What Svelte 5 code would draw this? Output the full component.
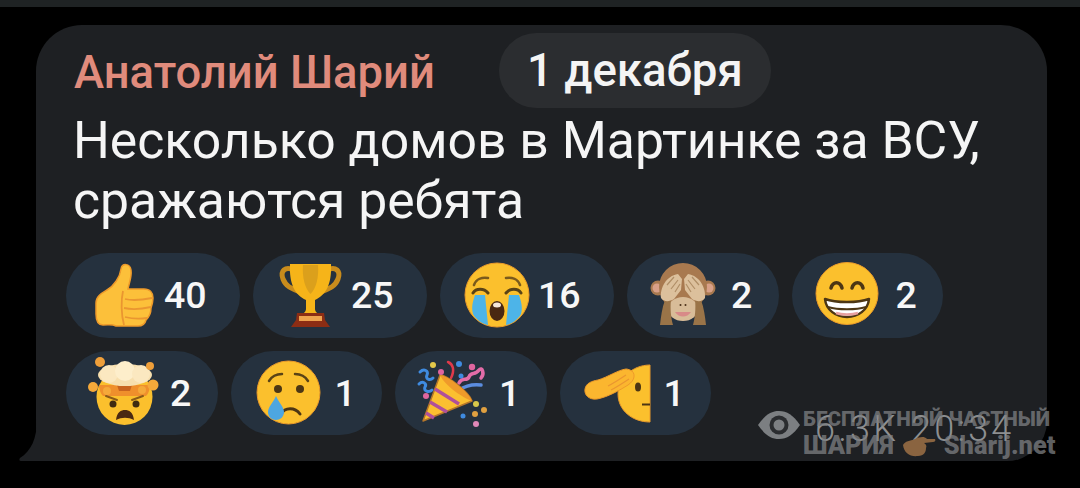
<script>
  const icons = {
    thumb: `
      <path d="M6 41C6 34 12 31 17 28C24 24 30 15 31 7C32 1 40 1 41 8C42 15 39 21 38 27L54 27C60 27 63 31 63 36C63 40 62 43 61 46C61 52 59 55 56 58C55 62 52 64 48 64L26 64C22 62 19 63 13 63C8 63 6 58 6 52Z" fill="#fcc03a" stroke="#ee9a2a" stroke-width="1.5"/>
      <path d="M33 29C31 38 31 52 34 63M35 37C43 39 52 38 62 36M34 46C43 48 52 47 61 45M35 55C43 57 50 57 57 56" fill="none" stroke="#ea9630" stroke-width="1.8"/>`,
    trophy: `
      <path d="M17 8C8 4 3 9 6 17C9 25 16 27 23 30M50 8C59 4 64 9 61 17C58 25 51 27 44 30" fill="none" stroke="#c98c1c" stroke-width="5"/>
      <path d="M13 2H54C55 22 49 33 38 38L38 47C38 50 41 52 44 53H23C26 52 29 50 29 47L29 38C18 33 12 22 13 2Z" fill="#f6b419"/>
      <path d="M26 3H41C42 15 39 27 33.500 32C28 27 25 15 26 3Z" fill="#dba01c"/>
      <path d="M20 51H47L48 58L53 65H14L19 58Z" fill="#8c2d14"/>
      <rect x="22" y="54" width="23" height="5" fill="#eea24e"/>`,
    cry: `
      <circle cx="33" cy="33" r="32" fill="#fbc02d" stroke="#ea9a2a" stroke-width="1"/>
      <path d="M10 23C12 17 18 15 24 16M56 23C54 17 48 15 42 16" fill="none" stroke="#7a5a1c" stroke-width="2.500" stroke-linecap="round"/>
      <path d="M9 31C12 26 20 26 24 31M42 31C46 26 54 26 57 31" fill="none" stroke="#5a4316" stroke-width="3" stroke-linecap="round"/>
      <path d="M11 33H21L24 63C19 62 12 58 9 52C7 45 9 39 11 33ZM45 33H55C57 39 59 45 57 52C54 58 47 62 42 63Z" fill="#4db4e8"/>
      <ellipse cx="33" cy="49" rx="7.500" ry="10" fill="#4a2812"/>
      <ellipse cx="33" cy="43" rx="4" ry="2.500" fill="#f5e6d8"/>`,
    monkey: `
      <circle cx="7" cy="26" r="7.500" fill="#a8794f"/><circle cx="57" cy="26" r="7.500" fill="#a8794f"/>
      <circle cx="6" cy="26" r="4.500" fill="#d8a088"/><circle cx="58" cy="26" r="4.500" fill="#d8a088"/>
      <ellipse cx="32" cy="25" rx="24" ry="24" fill="#a8794f"/>
      <ellipse cx="32" cy="47" rx="15" ry="12" fill="#d8bc98"/>
      <path d="M24 50C28 56 36 56 40 50Z" fill="#d88a88"/>
      <circle cx="29.500" cy="43" r="1" fill="#4a3018"/><circle cx="34.500" cy="43" r="1" fill="#4a3018"/>
      <path d="M9 63C10 54 11 46 14 38L20 38C19 46 20 56 22 63ZM55 63C54 54 53 46 50 38L44 38C45 46 44 56 42 63Z" fill="#9a7448"/>
      <path d="M10 36C9 26 15 14 27 12L31 17L30 28L23 37C18 40 13 40 10 36ZM54 36C55 26 49 14 37 12L33 17L34 28L41 37C46 40 51 40 54 36Z" fill="#dcc09c"/>
      <path d="M16 23L23 15M20 27L27 18M24 30L29 22M48 23L41 15M44 27L37 18M40 30L35 22" stroke="#b08e66" stroke-width="1.200"/>`,
    grin: `
      <circle cx="31" cy="31.500" r="31" fill="#fbc02d" stroke="#ea9a2a" stroke-width="1"/>
      <path d="M15 26C17 19 24 19 26 26M36 26C38 19 45 19 47 26" fill="none" stroke="#4c3614" stroke-width="3.500" stroke-linecap="round"/>
      <path d="M9 37C20 41 42 41 53 37C52 48 42 55 31 55C20 55 10 48 9 37Z" fill="#fff" stroke="#4c3614" stroke-width="2.500" stroke-linejoin="round"/>
      <path d="M12 45C22 48 40 48 50 45" fill="none" stroke="#4c3614" stroke-width="2"/>
      <path d="M20 51C26 53 36 53 42 51" fill="none" stroke="#e8a0a0" stroke-width="2.500"/>`,
    blown: `
      <circle cx="34.500" cy="37" r="28" fill="#fbc02d"/>
      <path d="M9 25H60C60 30 58 34 56 36H13C11 34 9 30 9 25Z" fill="#ef8f2c"/>
      <path d="M26 22H43L40 31H29Z" fill="#c8641f"/>
      <ellipse cx="35" cy="15" rx="27" ry="11" fill="#f7dfae"/>
      <circle cx="19" cy="14" r="9" fill="#fbe8c0"/><circle cx="35" cy="11" r="10" fill="#fdeecb"/><circle cx="51" cy="14" r="9" fill="#fbe8c0"/>
      <circle cx="10" cy="2" r="5" fill="#ef9f3a"/><circle cx="60" cy="6" r="4" fill="#ef9f3a"/>
      <circle cx="3" cy="27" r="5" fill="#f5a93a"/><circle cx="63" cy="25" r="5.500" fill="#f5a93a"/>
      <circle cx="17" cy="31" r="4" fill="#f5a93a"/><circle cx="52" cy="30" r="4" fill="#f5a93a"/>
      <circle cx="23" cy="44" r="3.500" fill="#3f2a10"/><circle cx="46" cy="44" r="3.500" fill="#3f2a10"/>
      <path d="M16 36L27 40M53 36L42 40" stroke="#8a5a18" stroke-width="2" stroke-linecap="round"/>
      <path d="M26 60C27 52 31 50 35 50C39 50 43 52 44 60C38 57 32 57 26 60Z" fill="#4a2812"/>`,
    sad: `
      <circle cx="33.500" cy="32.500" r="31.500" fill="#fbc02d" stroke="#ea9a2a" stroke-width="1"/>
      <path d="M14 21C17 16 22 14 27 14M53 21C50 16 45 14 40 14" fill="none" stroke="#5a4316" stroke-width="2.500" stroke-linecap="round"/>
      <circle cx="23" cy="29" r="4" fill="#4c3614"/><circle cx="45" cy="29" r="4" fill="#4c3614"/>
      <path d="M26 54C30 47 40 47 45 54" fill="none" stroke="#4c3614" stroke-width="3" stroke-linecap="round"/>
      <path d="M21 36C24 43 29 47 29 52C29 57 25 60 21 60C17 60 13 57 13 52C13 47 18 43 21 36Z" fill="#4da6e0"/>`,
    party: `
      <path d="M-1 14C3 10 8 13 6 17C4 21 9 23 12 20" transform="translate(2 -2)" fill="none" stroke="#3f8be0" stroke-width="3" stroke-linecap="round"/>
      <path d="M0 24C4 20 8 24 6 27C4 31 10 33 13 30" fill="none" stroke="#3f8be0" stroke-width="3" stroke-linecap="round"/>
      <path d="M29 2C34 4 36 10 32 18" fill="none" stroke="#e03a4a" stroke-width="2.500" stroke-linecap="round"/>
      <path d="M40 23C43 16 48 22 50 17C52 11 56 16 60 10C63 6 66 14 62 18" fill="none" stroke="#e36ca8" stroke-width="3.500" stroke-linecap="round"/>
      <path d="M40 30C46 26 54 24 62 25" fill="none" stroke="#5b8de0" stroke-width="3.500" stroke-linecap="round"/>
      <path d="M4 61L21 15C28 15 50 32 53 41Z" fill="#fbbf30" stroke="#b5762a" stroke-width="1.500" stroke-linejoin="round"/>
      <path d="M21 15C28 15 50 32 53 41C44 38 26 26 21 15Z" fill="#ef9a2a"/>
      <path d="M16 29L40 44M11 42L28 52M7 53L15 58" fill="none" stroke="#b0509a" stroke-width="3.500"/>
      <circle cx="14" cy="5" r="3" fill="#e3c84a"/><circle cx="22" cy="12" r="3" fill="#e0659f"/><circle cx="40" cy="4" r="3" fill="#3f8be0"/>
      <circle cx="53" cy="7" r="3.200" fill="#e0659f"/><circle cx="42" cy="16" r="2.500" fill="#3f8be0"/><circle cx="7" cy="36" r="3" fill="#e0659f"/>
      <circle cx="57" cy="44" r="3" fill="#d8c84a"/><circle cx="65" cy="50" r="3" fill="#e0a040"/><circle cx="56" cy="54" r="3" fill="#e0a040"/>
      <circle cx="44" cy="56" r="2.500" fill="#3f8be0"/><circle cx="57" cy="64" r="3" fill="#e088b8"/>`,
    salute: `
      <path d="M66 5C48 5 34 19 34 34C34 50 48 62 66 62Z" fill="#fbc02d" stroke="#ea9a2a" stroke-width="1"/>
      <path d="M48 11C52 15 50 21 44 25C36 30 24 37 13 39C5 40 0 35 1 29C2 23 8 21 14 20C24 17 34 10 42 9C44 9 46 10 48 11Z" fill="#fbb62f" stroke="#ee9a2a" stroke-width="1"/>
      <path d="M24 26C30 23 36 19 42 15M27 30C33 27 39 23 45 19" fill="none" stroke="#ea9630" stroke-width="1.200"/>
      <ellipse cx="54" cy="27" rx="3" ry="4.500" fill="#4c3614"/>
      <path d="M58 44.500H66" stroke="#4c3614" stroke-width="2"/>`
  };

  const rows = [
    [
      { icon: "thumb", count: 40 },
      { icon: "trophy", count: 25 },
      { icon: "cry", count: 16 },
      { icon: "monkey", count: 2 },
      { icon: "grin", count: 2 }
    ],
    [
      { icon: "blown", count: 2 },
      { icon: "sad", count: 1 },
      { icon: "party", count: 1 },
      { icon: "salute", count: 1 }
    ]
  ];
</script>

<div class="page">
  <div class="topbar"></div>

  <div class="bubble">
    <svg class="tail" width="22" height="42" viewBox="0 0 22 42">
      <path d="M18 0C18 20 12 32 1 39C0 40 0 42 2 42H22V0Z" fill="#1e2023" />
    </svg>

    <header class="head">
      <span class="name">Анатолий Шарий</span>
      <span class="date">1 декабря</span>
    </header>

    <p class="text">Несколько домов в Мартинке за ВСУ,<br />сражаются ребята</p>

    <div class="reactions">
      {#each rows as row}
        <div class="row">
          {#each row as r}
            <div class="chip" class:wide={r.count > 9}>
              <svg class="emoji" viewBox="0 0 66 66">{@html icons[r.icon]}</svg>
              <span class="count">{r.count}</span>
            </div>
          {/each}
        </div>
      {/each}
    </div>

    <div class="meta">
      <svg class="eye" width="44" height="30" viewBox="0 0 44 30">
        <path d="M1 15C8 5 14 1 22 1C30 1 36 5 43 15C36 25 30 29 22 29C14 29 8 25 1 15Z" fill="#7c7f82" />
        <circle cx="22" cy="15" r="9.500" fill="#2a2c2f" />
        <circle cx="22" cy="15" r="5.500" fill="#7c7f82" />
      </svg>
      <span class="stamp">6.3K 20:34</span>
      <div class="mark">
        <div class="mark-top">БЕСПЛАТНЫЙ ЧАСТНЫЙ</div>
        <div class="mark-bottom">
          ШАРИЯ
          <svg width="34" height="22" viewBox="0 0 34 22">
            <path d="M1 10C3 6 8 6 13 4C18 2 22 1 25 4L33 4C34 5 33 7 31 7L22 8C24 9 25 11 24 13C24 17 22 21 16 21C8 22 2 18 1 10Z" fill="#8a6440" />
          </svg>
          Sharij.net
        </div>
      </div>
    </div>
  </div>
</div>

<style>
  :global(body) {
    background: #000;
  }

  .page {
    width: 1080px;
    height: 488px;
    overflow: hidden;
    font-family: Roboto, "Noto Sans", sans-serif;
  }

  .topbar {
    height: 7px;
    background: #1f2324;
  }

  .bubble {
    position: relative;
    box-sizing: border-box;
    width: 1011px;
    margin: 18px 0 0 36px;
    padding: 8px 30px 26px;
    background: #1e2023;
    border-radius: 46px 46px 40px 0;
  }

  .tail {
    position: absolute;
    left: -17px;
    bottom: 0;
  }

  .head {
    display: flex;
    align-items: center;
    gap: 64px;
    padding-left: 8px;
  }

  .name {
    padding-top: 4px;
    font-size: 45.4px;
    font-weight: 500;
    color: #e08b7c;
  }

  .date {
    display: flex;
    align-items: center;
    height: 75px;
    padding: 0 28px;
    border-radius: 38px;
    background: #2b2d30;
    color: #f4f4f4;
    font-size: 45.6px;
    font-weight: 500;
  }

  .text {
    margin: 3px 0 22px;
    padding-left: 7px;
    font-size: 51.7px;
    line-height: 60px;
    color: #f5f5f5;
  }

  .reactions {
    display: flex;
    flex-direction: column;
    gap: 13px;
  }

  .row {
    display: flex;
    gap: 13px;
  }

  .chip {
    display: flex;
    align-items: center;
    box-sizing: border-box;
    width: 151.5px;
    height: 84.5px;
    padding-left: 24px;
    border-radius: 43px;
    background: #25313e;
  }

  .chip.wide {
    width: 174px;
  }

  .emoji {
    flex: none;
    width: 66px;
    height: 66px;
    overflow: visible;
    filter: blur(0.4px);
  }

  .count {
    margin-left: 14px;
    font-size: 37.5px;
    font-weight: 500;
    color: #f7f7f7;
  }

  .wide .count {
    margin-left: 8px;
  }

  .meta {
    position: absolute;
    left: 721px;
    top: 383px;
    width: 300px;
    height: 54px;
  }

  .eye {
    position: absolute;
    left: 0;
    top: 2px;
  }

  .stamp {
    position: absolute;
    left: 58px;
    top: 0;
    font-size: 36px;
    line-height: 42px;
    letter-spacing: 3.2px;
    font-weight: 300;
    color: #8d8f91;
  }

  .mark {
    position: absolute;
    left: 46px;
    top: -2px;
    font-weight: 900;
    color: rgba(125, 127, 130, 0.75);
    white-space: nowrap;
  }

  .mark-top {
    font-size: 20.7px;
    line-height: 26px;
  }

  .mark-bottom {
    display: flex;
    align-items: center;
    gap: 8px;
    font-size: 25.4px;
    line-height: 27px;
  }
</style>
